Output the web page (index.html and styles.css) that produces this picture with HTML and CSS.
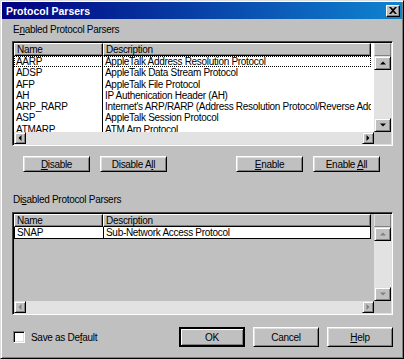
FILE: index.html
```html
<!DOCTYPE html>
<html>
<head>
    <meta name="viewport" content="width=device-width, initial-scale=1.0">
    <link rel="stylesheet" href="styles.css">
</head>
<body>
    <div class="window">
        <div class="titlebar">
            <span class="title">Protocol Parsers</span>
            <span class="close-button">
                <svg width="8" height="7" viewBox="0 0 8 7"><path d="M0 0h2l2 2 2-2h2L5 3.5 8 7H6L4 5 2 7H0l3-3.5z" fill="#000"/></svg>
            </span>
        </div>
        <div class="content">
            <div class="label">E<u>n</u>abled Protocol Parsers</div>
            <div class="listbox list-enabled">
                <div class="list-main">
                    <div class="list-header">
                        <div class="col-name">Name</div>
                        <div class="col-desc">Description</div>
                    </div>
                    <div class="row selected"><div class="cell-name">AARP</div><div class="cell-desc">AppleTalk Address Resolution Protocol</div></div>
                    <div class="row"><div class="cell-name">ADSP</div><div class="cell-desc">AppleTalk Data Stream Protocol</div></div>
                    <div class="row"><div class="cell-name">AFP</div><div class="cell-desc">AppleTalk File Protocol</div></div>
                    <div class="row"><div class="cell-name">AH</div><div class="cell-desc">IP Authenication Header (AH)</div></div>
                    <div class="row"><div class="cell-name">ARP_RARP</div><div class="cell-desc">Internet's ARP/RARP (Address Resolution Protocol/Reverse Address Resolution Protocol)</div></div>
                    <div class="row"><div class="cell-name">ASP</div><div class="cell-desc">AppleTalk Session Protocol</div></div>
                    <div class="row"><div class="cell-name">ATMARP</div><div class="cell-desc">ATM Arp Protocol</div></div>
                </div>
                <div class="vscroll">
                    <div class="scroll-cap"></div>
                    <div class="scroll-btn arrow-up"></div>
                    <div class="scroll-track"></div>
                    <div class="scroll-btn arrow-down"></div>
                </div>
                <div class="hscroll">
                    <div class="scroll-btn arrow-left"></div>
                    <div class="scroll-track"></div>
                    <div class="scroll-btn arrow-right"></div>
                </div>
                <div class="corner"></div>
            </div>

            <div class="button-row">
                <div class="button-group">
                    <div class="button"><span><u>D</u>isable</span></div>
                    <div class="button"><span>Disable A<u>l</u>l</span></div>
                </div>
                <div class="button-group right">
                    <div class="button"><span><u>E</u>nable</span></div>
                    <div class="button"><span>Enable <u>A</u>ll</span></div>
                </div>
            </div>

            <div class="label label-disabled">Di<u>s</u>abled Protocol Parsers</div>
            <div class="listbox list-disabled">
                <div class="list-main">
                    <div class="list-header">
                        <div class="col-name">Name</div>
                        <div class="col-desc">Description</div>
                    </div>
                    <div class="row boxed"><div class="cell-name">SNAP</div><div class="cell-desc">Sub-Network Access Protocol</div></div>
                </div>
                <div class="vscroll">
                    <div class="scroll-cap"></div>
                    <div class="scroll-btn arrow-up dim"></div>
                    <div class="scroll-track"></div>
                    <div class="scroll-btn arrow-down dim"></div>
                </div>
                <div class="hscroll">
                    <div class="scroll-btn arrow-left dim"></div>
                    <div class="scroll-track"></div>
                    <div class="scroll-btn arrow-right dim"></div>
                </div>
                <div class="corner"></div>
            </div>

            <div class="bottom-row">
                <div class="checkbox-wrap">
                    <span class="checkbox"></span>
                    <span>Save as De<u>f</u>ault</span>
                </div>
                <div class="button-group right">
                    <div class="button big default"><span>OK</span></div>
                    <div class="button big"><span>Cancel</span></div>
                    <div class="button big"><span><u>H</u>elp</span></div>
                </div>
            </div>
        </div>
    </div>
</body>
</html>
```

FILE: styles.css
```css
body {
    margin: 0;
    padding: 0;
    font-family: "Liberation Sans", Arial, sans-serif;
    font-size: 10px;
    letter-spacing: -0.3px;
    color: #000;
}

u {
    text-decoration-thickness: 1px;
    text-underline-offset: 1px;
}

.window {
    width: 404px;
    height: 359px;
    box-sizing: border-box;
    background-color: #c0c0c0;
    border: 1px solid;
    border-color: #dfdfdf #000 #000 #dfdfdf;
    box-shadow: inset 1px 1px #fff, inset -1px -1px #808080;
    padding: 1px;
    display: flex;
    flex-direction: column;
}

.titlebar {
    height: 17px;
    flex-shrink: 0;
    background: linear-gradient(to right, #000080, #1084d0);
    display: flex;
    align-items: center;
    justify-content: space-between;
    padding: 0 2px 0 4px;
    color: white;
    font-weight: bold;
    font-size: 10.5px;
    letter-spacing: 0;
}

.close-button {
    width: 14px;
    height: 12px;
    box-sizing: border-box;
    background-color: #c0c0c0;
    border: 1px solid;
    border-color: #fff #000 #000 #fff;
    box-shadow: inset -1px -1px #808080;
    display: flex;
    align-items: center;
    justify-content: center;
}

.content {
    padding: 5px 9px 0 10px;
}

.label {
    height: 12px;
    line-height: 12px;
    padding-left: 1px;
}

.label-disabled {
    margin-top: 22px;
}

/* list views */
.listbox {
    margin-top: 5px;
    height: 105px;
    box-sizing: border-box;
    border: 1px solid;
    border-color: #404040 #fff #fff #404040;
    box-shadow: inset 1px 1px #000, inset -1px -1px #dfdfdf;
    padding: 1px;
    display: grid;
    grid-template-columns: 1fr 17px;
    grid-template-rows: 1fr 12px;
    background-color: white;
}

.list-disabled {
    margin-top: 6px;
    height: 103px;
    background-color: #c0c0c0;
}

.list-main {
    overflow: hidden;
    white-space: nowrap;
}

.list-header {
    display: flex;
    height: 13px;
    line-height: 11px;
}

.list-header div {
    box-sizing: border-box;
    background-color: #c0c0c0;
    border: 1px solid;
    border-color: #fff #000 #000 #fff;
    box-shadow: inset -1px -1px #808080;
    padding-left: 2px;
}

.col-name {
    width: 89px;
}

.col-desc {
    width: 268px;
}

.row {
    display: flex;
    height: 11.3px;
    line-height: 11px;
    background-color: white;
    width: 357px;
    box-sizing: border-box;
}

.row.selected {
    outline: 1px dotted #000;
    outline-offset: -1px;
}

.row.boxed {
    height: 12px;
    border: 1px solid #000;
    border-top: none;
}

.cell-name {
    width: 89px;
    padding-left: 2px;
    box-sizing: border-box;
    border-right: 1px solid #000;
}

.cell-desc {
    flex: 1;
    padding-left: 2px;
    overflow: hidden;
}

/* scroll bars */
.vscroll {
    display: flex;
    flex-direction: column;
    background-color: #c0c0c0;
}

.hscroll {
    display: flex;
    background-color: #c0c0c0;
}

.scroll-cap {
    height: 13px;
    box-sizing: border-box;
    border: 1px solid;
    border-color: #dfdfdf #808080 #808080 #dfdfdf;
}

.scroll-track {
    flex: 1;
    background-color: #e2e2e2;
}

.scroll-btn {
    position: relative;
    box-sizing: border-box;
    background-color: #c0c0c0;
    border: 1px solid;
    border-color: #dfdfdf #000 #000 #dfdfdf;
    box-shadow: inset 1px 1px #fff, inset -1px -1px #808080;
}

.vscroll .scroll-btn {
    height: 14px;
}

.hscroll .scroll-btn {
    width: 12px;
}

.scroll-btn::before {
    content: "";
    position: absolute;
    left: 50%;
    top: 50%;
    width: 0;
    height: 0;
    border: 3px solid transparent;
}

.arrow-up::before {
    border-bottom-color: #000;
    border-top-width: 0;
    transform: translate(-50%, -50%);
}

.arrow-down::before {
    border-top-color: #000;
    border-bottom-width: 0;
    transform: translate(-50%, -50%);
}

.arrow-left::before {
    border-right-color: #000;
    border-left-width: 0;
    transform: translate(-50%, -50%);
}

.arrow-right::before {
    border-left-color: #000;
    border-right-width: 0;
    transform: translate(-50%, -50%);
}

.dim.arrow-up::before { border-bottom-color: #808080; }
.dim.arrow-down::before { border-top-color: #808080; }
.dim.arrow-left::before { border-right-color: #808080; }
.dim.arrow-right::before { border-left-color: #808080; }

.corner {
    background-color: #c0c0c0;
}

/* buttons */
.button-row {
    margin-top: 10px;
    display: flex;
    justify-content: space-between;
    padding: 0 13px 0 11px;
}

.button-group {
    display: flex;
    gap: 10px;
}

.button {
    width: 67px;
    height: 16px;
    box-sizing: border-box;
    background-color: #c0c0c0;
    border: 1px solid;
    border-color: #fff #000 #000 #fff;
    box-shadow: inset 1px 1px #dfdfdf, inset -1px -1px #808080;
    display: flex;
    align-items: center;
    justify-content: center;
}

.bottom-row {
    margin-top: 12px;
    display: flex;
    justify-content: space-between;
    align-items: center;
}

.bottom-row .button-group {
    gap: 8px;
}

.button.big {
    width: 66px;
    height: 20px;
}

.button.default {
    outline: 1px solid #000;
    outline-offset: -1px;
    border-width: 2px;
    border-color: #000;
    box-shadow: inset 1px 1px #fff, inset -1px -1px #808080;
}

.checkbox-wrap {
    display: flex;
    align-items: center;
    gap: 6px;
    padding-left: 1px;
}

.checkbox {
    width: 12px;
    height: 12px;
    box-sizing: border-box;
    background-color: white;
    border: 1px solid;
    border-color: #808080 #fff #fff #808080;
    box-shadow: inset 1px 1px #000, inset -1px -1px #dfdfdf;
}
```
